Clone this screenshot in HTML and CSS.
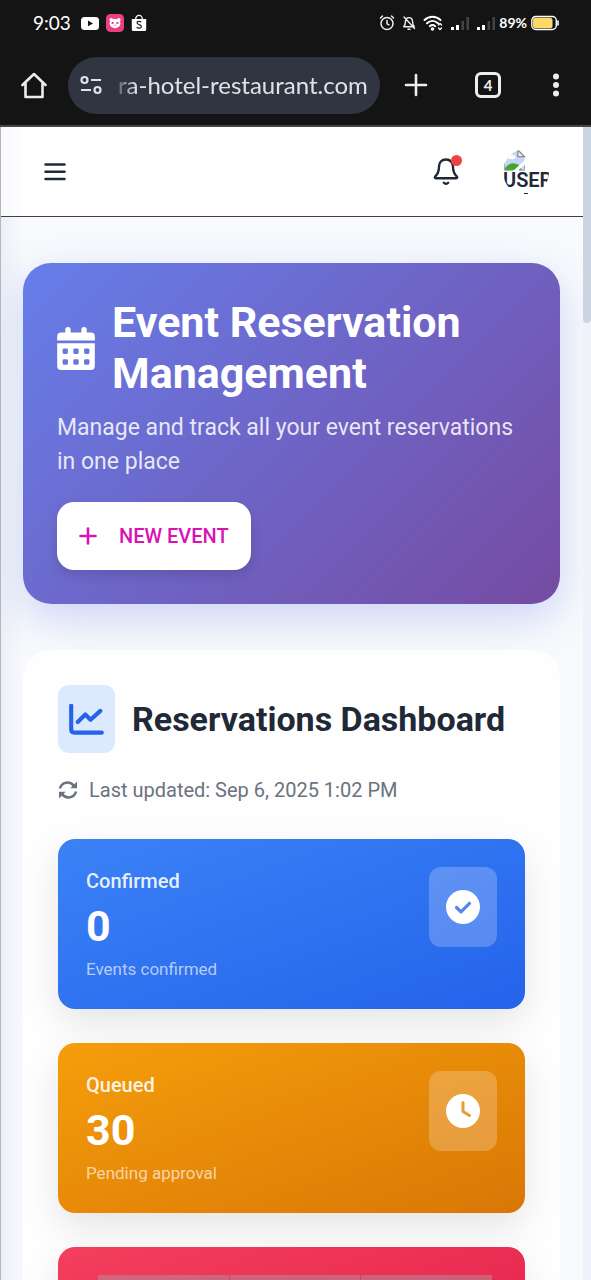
FILE: index.html
```html
<!DOCTYPE html>
<html lang="en">
<head>
<meta charset="utf-8">
<meta name="viewport" content="width=device-width, initial-scale=1">
<title>Event Reservation Management</title>
<link rel="stylesheet" href="styles.css">
</head>
<body>
<div class="status-bar">
  <span class="clock">9:03</span>
  <svg class="app-icon" width="18" height="18" viewBox="0 0 18 18"><rect x="0" y="3" width="18" height="13" rx="3.5" fill="#fff"/><path d="M7 6.6v5.6l5-2.8z" fill="#141414"/></svg>
  <svg class="app-icon" width="18" height="18" viewBox="0 0 18 18"><rect width="18" height="18" rx="4.5" fill="#ec3f83"/><circle cx="5.2" cy="5.8" r="1.8" fill="#fff"/><circle cx="12.800" cy="5.8" r="1.8" fill="#fff"/><ellipse cx="9" cy="9.6" rx="5.400" ry="4.600" fill="#fff"/><ellipse cx="6.600" cy="9" rx="1.3" ry="1.100" fill="#ec3f83"/><ellipse cx="11.400" cy="9" rx="1.3" ry="1.100" fill="#ec3f83"/><path d="M8 10.800h2l-1 1.200z" fill="#ec3f83"/></svg>
  <svg class="app-icon" width="16" height="18" viewBox="0 0 16 18"><path d="M4.6 5.5C4.6 0 11.4 0 11.4 5.5" fill="none" stroke="#fff" stroke-width="1.3"/><path d="M.8 5h14.4v10.500a1.600 1.600 0 0 1-1.600 1.600H2.400a1.600 1.600 0 0 1-1.600-1.600z" fill="#fff"/><path d="M10.200 8.200C9 6.900 6 7 6 8.800c0 2.200 4.400 1.400 4.400 3.700 0 2-3.200 2.200-4.800.7" fill="none" stroke="#222" stroke-width="1.200"/></svg>
  <div class="status-right">
    <svg width="16" height="18" viewBox="0 0 16 18" fill="none" stroke="#eee" stroke-width="1.5" stroke-linecap="round"><circle cx="8" cy="9.500" r="6"/><path d="M8 6.500v3.300l2 1M1.500 4l2-2M14.500 4l-2-2"/></svg>
    <svg class="muted-bell" width="14" height="18" viewBox="0 0 14 18" fill="none" stroke="#eee" stroke-width="1.400" stroke-linecap="round" stroke-linejoin="round"><path d="M3.500 7C4 2.500 10 2.500 10.500 7c0 2.500.3 4 1.800 5.800H1.700C3.200 11 3.500 9.500 3.500 7zM6 15.200h2M2 3l10.500 11.500"/></svg>
    <svg width="20" height="18" viewBox="0 0 20 18" fill="none" stroke="#fff" stroke-width="2" stroke-linecap="round"><path d="M1.500 6C6 1.500 13 1.500 17.500 6M4 9.300c3.300-3 7.700-3 11 0M6.800 12.200c1.700-1.400 3.700-1.400 5.400 0"/><circle cx="9.500" cy="15" r=".8"/><path d="m15.500 11 1.500-1.500 1.500 1.500M15.500 14l1.500 1.500 1.500-1.500" stroke-width="1.300"/></svg>
    <svg width="19" height="18" viewBox="0 0 19 18"><path d="M1 13h3v3H1zM6 11h3v5H6z" fill="#fff"/><path d="M11.500 7h2.500v9h-2.500zM16.500 3H19v13h-2.500z" fill="#444"/></svg>
    <svg width="19" height="18" viewBox="0 0 19 18"><path d="M1 13h3v3H1zM6 11h3v5H6z" fill="#fff"/><path d="M11.500 7h2.500v9h-2.500zM16.500 3H19v13h-2.500z" fill="#444"/></svg>
    <span class="battery-level">89%</span>
    <svg width="28" height="16" viewBox="0 0 28 16"><rect x=".8" y="1.500" width="24.500" height="13" rx="4" fill="none" stroke="#fff" stroke-width="1.400"/><rect x="2" y="2.800" width="19.500" height="10.400" rx="2.500" fill="#ffd968"/><path d="M27 6v4" stroke="#fff" stroke-width="1.600" stroke-linecap="round"/></svg>
  </div>
</div>

<div class="browser-bar">
  <button class="browser-button" type="button" aria-label="Home"><svg width="26" height="28" viewBox="0 0 26 28" fill="none" stroke="#ededed" stroke-width="2.600" stroke-linejoin="round" stroke-linecap="round"><path d="M1.500 14 13 3l11.500 11M4.500 12v14h17V12"/></svg></button>
  <label class="address">
    <svg width="22" height="20" viewBox="0 0 22 20" fill="none" stroke="#dfe2e8" stroke-width="2.200"><circle cx="4.500" cy="5" r="3"/><path d="M11 5h10M1 15h10"/><circle cx="17.500" cy="15" r="3"/></svg>
    <input class="address-input" type="text" aria-label="Address" value="ra-hotel-restaurant.com">
  </label>
  <button class="browser-button" type="button" aria-label="New tab"><svg width="24" height="24" viewBox="0 0 24 24" stroke="#ededed" stroke-width="2.600" stroke-linecap="round"><path d="M12 2v20M2 12h20"/></svg></button>
  <button class="browser-button" type="button" aria-label="Open tabs"><span class="tab-count">4</span></button>
  <button class="browser-button menu-button" type="button" aria-label="Browser menu"><svg width="8" height="26" viewBox="0 0 8 26" fill="#ededed"><circle cx="4" cy="4.500" r="3"/><circle cx="4" cy="13" r="3"/><circle cx="4" cy="21.500" r="3"/></svg></button>
</div>

<div class="viewport">
  <div class="page">
    <header class="app-header">
      <button class="icon-button" type="button" aria-label="Toggle menu"><svg width="22" height="18" viewBox="0 0 22 18" stroke="#1f2937" stroke-width="2.500" stroke-linecap="round"><path d="M1.500 1.500h19M1.500 8.700h19M1.500 16h19"/></svg></button>
      <div class="header-actions">
        <button class="icon-button bell" type="button" aria-label="Notifications">
          <svg width="26" height="28" viewBox="0 0 26 28" fill="none" stroke="#1f2937" stroke-width="2.400" stroke-linecap="round" stroke-linejoin="round"><path d="M13 1.500c-4.500 0-7 3.200-7 7.200 0 5.200-1.200 7.300-3.900 10-.7.800-.3 1.500.7 1.500h20.400c1 0 1.400-.7.700-1.500C21.200 16 20 13.900 20 8.700c0-4-2.500-7.200-7-7.200zM10.800 24.800c1.200 1.300 3.200 1.300 4.400 0"/></svg>
          <span class="bell-dot"></span>
        </button>
        <button class="avatar" type="button" aria-label="User account">
          <svg width="23" height="22" viewBox="0 0 23 23"><path d="M1 1h14l7 7v14H1z" fill="#c3d7f8"/><path d="M15 1v7h7z" fill="#f4f4f4" stroke="#8d8d8d" stroke-width="1.400"/><ellipse cx="8.500" cy="8.500" rx="4.200" ry="2.200" fill="#fff"/><path d="M1 22c1-4 5-7 9-7 5 0 8 3 9 7z" fill="#46a52e"/><path d="M10 23 23 11v4.500L15 23z" fill="#fff"/><path d="M1 22.300h9M16 22.300h6V17M1 22V3" fill="none" stroke="#a3a3a3" stroke-width="1"/></svg>
          <span class="avatar-text">USER</span>
          <span class="avatar-more"></span>
        </button>
      </div>
    </header>

    <main class="content">
      <section class="hero">
        <div class="hero-heading">
          <svg class="hero-icon" width="38" height="43" viewBox="0 0 448 512" fill="#fff"><path d="M128 0a32 32 0 0 1 32 32v32h128V32a32 32 0 0 1 64 0v32h48a48 48 0 0 1 48 48v48H0v-48a48 48 0 0 1 48-48h48V32a32 32 0 0 1 32-32z"/><path fill-rule="evenodd" d="M0 192h448v272a48 48 0 0 1-48 48H48a48 48 0 0 1-48-48zm64 80v32q0 16 16 16h32q16 0 16-16v-32q0-16-16-16H80q-16 0-16 16zm128 0v32q0 16 16 16h32q16 0 16-16v-32q0-16-16-16h-32q-16 0-16 16zm128 0v32q0 16 16 16h32q16 0 16-16v-32q0-16-16-16h-32q-16 0-16 16zM64 400v32q0 16 16 16h32q16 0 16-16v-32q0-16-16-16H80q-16 0-16 16zm128 0v32q0 16 16 16h32q16 0 16-16v-32q0-16-16-16h-32q-16 0-16 16zm128 0v32q0 16 16 16h32q16 0 16-16v-32q0-16-16-16h-32q-16 0-16 16z"/></svg>
          <h1 class="hero-title">Event Reservation Management</h1>
        </div>
        <p class="hero-text">Manage and track all your event reservations in one place</p>
        <button class="new-event" type="button"><svg width="18" height="18" viewBox="0 0 18 18" stroke="#d912b4" stroke-width="2.600" stroke-linecap="round"><path d="M9 1.500v15M1.500 9h15"/></svg>NEW EVENT</button>
      </section>

      <section class="dashboard">
        <div class="dashboard-heading">
          <span class="dashboard-icon"><svg width="35" height="31" viewBox="0 0 512 448" fill="none" stroke="#2563eb" stroke-width="60" stroke-linecap="round" stroke-linejoin="round"><path d="M32 20v348q0 48 48 48h400M128 260l110-110 78 78L458 98"/></svg></span>
          <h2 class="dashboard-title">Reservations Dashboard</h2>
        </div>
        <p class="updated"><svg width="20" height="20" viewBox="0 0 20 20" fill="none" stroke="#6b7280" stroke-width="2.500"><path d="M2 8.500C3.500 1.800 12 .5 16 6M18 11.500C16.500 18.200 8 19.500 4 14"/><path d="M19 1.500v6.700h-6.700zM1 18.500v-6.700h6.700z" fill="#6b7280" stroke="none"/></svg>Last updated: Sep 6, 2025 1:02 PM</p>

        <div class="stats">
          <article class="stat stat-confirmed">
            <div>
              <h3 class="stat-label">Confirmed</h3>
              <p class="stat-value">0</p>
              <p class="stat-note">Events confirmed</p>
            </div>
            <span class="stat-icon"><svg width="34" height="34" viewBox="0 0 34 34"><circle cx="17" cy="17" r="17" fill="#fff"/><path d="m10.500 17.500 4.500 4.300 8.500-8.500" fill="none" stroke="#5584ec" stroke-width="3.200" stroke-linecap="round" stroke-linejoin="round"/></svg></span>
          </article>
          <article class="stat stat-queued">
            <div>
              <h3 class="stat-label">Queued</h3>
              <p class="stat-value">30</p>
              <p class="stat-note">Pending approval</p>
            </div>
            <span class="stat-icon"><svg width="34" height="34" viewBox="0 0 34 34"><circle cx="17" cy="17" r="17" fill="#fff"/><path d="M17 8.500V17.500l6.500 4" fill="none" stroke="#e69c38" stroke-width="3" stroke-linecap="round" stroke-linejoin="round"/></svg></span>
          </article>
          <article class="stat stat-third">
            <div class="segments"><span></span><span></span><span></span></div>
          </article>
        </div>
      </section>
    </main>
  </div>
  <div class="scroll-track"><div class="scroll-thumb"></div></div>
</div>
</body>
</html>
```

FILE: styles.css
```css
* { box-sizing: border-box; }

body {
  margin: 0;
  height: 100vh;
  display: flex;
  flex-direction: column;
  overflow: hidden;
  background: #141414;
  color: #1f2937;
  font-family: Roboto, "Liberation Sans", sans-serif;
}

h1, h2, h3, p { margin: 0; }
svg { display: block; flex: none; }

button {
  border: 0;
  padding: 0;
  background: none;
  color: inherit;
  font: inherit;
}

/* Phone status bar */
.status-bar {
  flex: none;
  display: flex;
  align-items: center;
  gap: 7px;
  height: 45px;
  padding: 0 32px 0 33px;
  color: #fff;
}
.clock {
  margin-right: 3px;
  font: 19px/24px Lato, sans-serif;
}
.status-right {
  display: flex;
  align-items: center;
  gap: 7px;
  margin-left: auto;
}
.battery-level { font: 700 14px/20px Lato, sans-serif; margin: 0 -3px; }

/* Browser toolbar */
.browser-bar {
  flex: none;
  display: flex;
  align-items: center;
  height: 82px;
  padding: 0 13px 0 12px;
  border-bottom: 2px solid #444;
}
.browser-button {
  display: flex;
  flex: none;
  align-items: center;
  justify-content: center;
  width: 72px;
  height: 48px;
}
.browser-button:first-child { width: 44px; margin-right: 12px; }
.menu-button { width: 44px; margin-left: 10px; }
.address {
  display: flex;
  flex: 1;
  align-items: center;
  gap: 14px;
  min-width: 0;
  height: 57px;
  padding: 0 8px 0 12px;
  border-radius: 29px;
  background: #303541;
}
.address-input {
  flex: 1;
  min-width: 0;
  border: 0;
  padding: 0 0 0 2px;
  background: none;
  color: #dfe2e8;
  font: 24px/32px Lato, sans-serif;
  -webkit-mask-image: linear-gradient(to right, rgba(0, 0, 0, 0.2), #000 20px);
  mask-image: linear-gradient(to right, rgba(0, 0, 0, 0.2), #000 20px);
}
.tab-count {
  width: 26px;
  height: 26px;
  border: 3px solid #ededed;
  border-radius: 6px;
  color: #ededed;
  font: 700 15px/20px Lato, sans-serif;
}

/* Web page area */
.viewport {
  flex: 1;
  display: flex;
  min-height: 0;
  background: #f8fafc;
}
.page {
  flex: 1;
  min-width: 0;
  overflow: hidden;
  border-left: 1px solid #b4b5bd;
}
.scroll-track {
  flex: none;
  width: 8px;
  background: #eff3f9;
}
.scroll-thumb {
  height: 17%;
  border-radius: 0 0 4px 4px;
  background: #cbd5e1;
}

.app-header {
  display: flex;
  align-items: center;
  justify-content: space-between;
  height: 90px;
  padding: 0 34px 0 43px;
  border-bottom: 1px solid #374151;
  background: linear-gradient(to right, #f9f9fc, #fff 24px);
}
.header-actions {
  display: flex;
  align-items: center;
  gap: 44px;
}
.bell { position: relative; }
.bell-dot {
  position: absolute;
  top: -3px;
  right: -3px;
  width: 11px;
  height: 11px;
  border-radius: 50%;
  background: #ef4444;
}
.avatar {
  display: flex;
  flex-direction: column;
  align-items: flex-start;
  width: 46px;
  height: 46px;
  border-radius: 50%;
  overflow: hidden;
  font-weight: 600;
  font-size: 20px;
}
.avatar-text { line-height: 18px; }
/* Tip of the clipped second line of the alt text */
.avatar-more {
  align-self: center;
  width: 4px;
  height: 1px;
  margin-top: 4px;
  background: #1f2937;
}

.content {
  display: flex;
  flex-direction: column;
  gap: 46px;
  padding: 46px 23px 0 22px;
  background: linear-gradient(to right, #edf0f7, #f8fafc 24px);
}

.hero {
  padding: 34px;
  border-radius: 28px;
  background: linear-gradient(135deg, #667eea 0%, #764ba2 100%);
  box-shadow: 0 14px 43px rgba(102, 126, 234, 0.3);
  color: #fff;
}
.hero-heading {
  display: flex;
  align-items: center;
  gap: 17px;
}
.hero-title { font-size: 43px; line-height: 51px; font-weight: 700; }
.hero-text {
  margin-top: 12px;
  color: rgba(255, 255, 255, 0.85);
  font-size: 23px;
  line-height: 34px;
}
.new-event {
  display: flex;
  align-items: center;
  gap: 22px;
  height: 68px;
  margin-top: 23px;
  padding: 0 22px;
  border-radius: 17px;
  background: #fff;
  box-shadow: 0 6px 12px rgba(0, 0, 0, 0.12);
  color: #d912b4;
  font-size: 20px;
  font-weight: 500;
}

.dashboard {
  padding: 35px;
  border-radius: 28px;
  background: #fefefe;
}
.dashboard-heading {
  display: flex;
  align-items: center;
  gap: 17px;
}
.dashboard-icon {
  display: flex;
  align-items: center;
  justify-content: center;
  width: 57px;
  height: 68px;
  border-radius: 11px;
  background: #dbeafe;
}
.dashboard-title { font-size: 34px; line-height: 44px; font-weight: 700; }
.updated {
  display: flex;
  align-items: center;
  gap: 11px;
  margin-top: 23px;
  color: #6b7280;
  font-size: 20px;
  line-height: 28px;
}

.stats {
  display: flex;
  flex-direction: column;
  gap: 34px;
  margin-top: 35px;
}
.stat {
  display: flex;
  align-items: flex-start;
  justify-content: space-between;
  min-height: 170px;
  padding: 28px;
  border-radius: 17px;
  box-shadow: 0 14px 36px rgba(0, 0, 0, 0.1);
  color: #fff;
}
.stat-confirmed { background: linear-gradient(160deg, #3b82f6, #2563eb); }
.stat-queued { background: linear-gradient(160deg, #f59e0b, #d97706); }
.stat-third { background: linear-gradient(160deg, #f43f5e, #e11d48); }
.stat-label {
  color: rgba(255, 255, 255, 0.9);
  font-size: 20px;
  line-height: 28px;
  font-weight: 500;
}
.stat-value { font-size: 43px; line-height: 62px; font-weight: 700; }
.stat-note {
  color: rgba(255, 255, 255, 0.65);
  font-size: 17px;
  line-height: 24px;
}
.stat-icon {
  display: flex;
  align-items: center;
  justify-content: center;
  width: 68px;
  height: 80px;
  border-radius: 12px;
  background: rgba(255, 255, 255, 0.22);
}
.segments {
  flex: 1;
  display: grid;
  grid-template-columns: repeat(3, 1fr);
  gap: 1px;
  height: 80px;
  margin: 0 5px 0 12px;
}
.segments span { background: rgba(170, 150, 160, 0.5); }
```
